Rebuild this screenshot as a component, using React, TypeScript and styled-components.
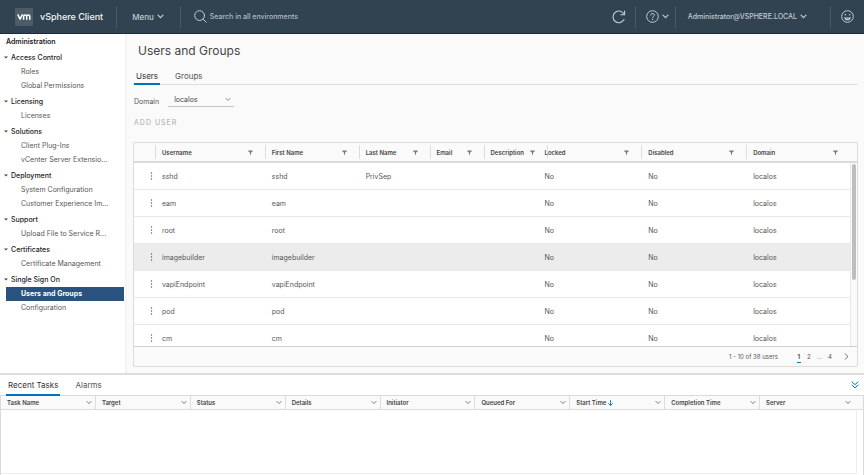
import React from "react";
import styled, { createGlobalStyle } from "styled-components";

const GlobalStyle = createGlobalStyle`
  *, *::before, *::after { box-sizing: border-box; }
  body { margin: 0; background: #fafafa; }
  body, button, input, select, table {
    font-family: Inter, "Liberation Sans", sans-serif;
    font-size: 7px;
    color: #565656;
  }
  button { padding: 0; border: 0; background: none; cursor: pointer; }
  a { color: inherit; text-decoration: none; }
`;

const Page = styled.div`
  height: 100vh;
  display: flex;
  flex-direction: column;
  overflow: hidden;
`;

/* ---------- header ---------- */

const Header = styled.header`
  flex: none;
  height: 34px;
  display: flex;
  align-items: center;
  background: #314351;
  border-bottom: 1px solid #1a2a3a;
  color: #c3cbd1;
`;

const Brand = styled.a`
  display: flex;
  align-items: center;
  gap: 7px;
  padding: 0 13px 0 15px;
  color: #f2f5f7;
  font-size: 9px;
  font-weight: 500;
  white-space: nowrap;
`;

const LogoTile = styled.span`
  width: 18px;
  height: 18px;
  display: grid;
  place-items: center;
  border-radius: 1px;
  background: #4c5c69;
`;

const Divider = styled.span`
  width: 1px;
  height: 22px;
  background: #485966;
`;

const HeaderButton = styled.button<{ $pad: string; $small?: boolean }>`
  display: flex;
  align-items: center;
  gap: 3px;
  padding: ${(p) => p.$pad};
  color: #c3cbd1;
  font-size: ${(p) => (p.$small ? "7px" : "8px")};
  font-weight: 500;
  white-space: nowrap;
`;

const SearchBox = styled.label`
  flex: 1;
  display: flex;
  align-items: center;
  gap: 3px;
  padding-left: 13px;
`;

const SearchInput = styled.input`
  flex: 1;
  min-width: 0;
  padding: 0;
  border: 0;
  outline: 0;
  background: transparent;
  color: #fff;
  font-size: 7px;
  font-weight: 500;
  &::placeholder { color: #b1bac1; opacity: 1; }
`;

/* ---------- navigation ---------- */

const Main = styled.div`
  flex: 1;
  min-height: 0;
  display: flex;
`;

const Sidebar = styled.nav`
  flex: none;
  width: 127px;
  background: #fff;
  border-right: 2px solid #f3f3f3;
  overflow: hidden;
`;

const NavTitle = styled.h2`
  margin: 0;
  padding-left: 6px;
  font-size: 7px;
  font-weight: 600;
  line-height: 15px;
  color: #222;
`;

const GroupButton = styled.button`
  display: flex;
  align-items: center;
  gap: 3px;
  height: 16px;
  padding-left: 4px;
  color: #222;
  font-weight: 500;
`;

const NavList = styled.ul`
  margin: 0;
  padding: 0 1px 0 6px;
  list-style: none;
`;

const NavLink = styled.a<{ $active?: boolean }>`
  display: block;
  padding: 0 14px 0 15px;
  line-height: 14px;
  white-space: nowrap;
  color: ${(p) => (p.$active ? "#fff" : "#565656")};
  font-weight: ${(p) => (p.$active ? 700 : 400)};
  background: ${(p) => (p.$active ? "#29527e" : "transparent")};
`;

/* ---------- content ---------- */

const Content = styled.main`
  flex: 1;
  min-width: 0;
  display: flex;
  flex-direction: column;
  align-items: stretch;
  padding: 8px 6px 6px;
  background: #fafafa;
`;

const Title = styled.h1`
  margin: 0 0 7px 5px;
  font-size: 12px;
  font-weight: 400;
  line-height: 18px;
  color: #454545;
`;

const Tabs = styled.div<{ $inset?: boolean }>`
  display: flex;
  gap: 13px;
  height: ${(p) => (p.$inset ? "20px" : "18px")};
  padding: ${(p) => (p.$inset ? "0 6px" : "0 1px")};
  border-bottom: ${(p) => (p.$inset ? "0" : "1px solid #dedede")};
`;

const Tab = styled.button<{ $active?: boolean }>`
  margin-bottom: -1px;
  padding: 0 2px 1px;
  font-size: 8px;
  white-space: nowrap;
  color: ${(p) => (p.$active ? "#333" : "#565656")};
  box-shadow: ${(p) => (p.$active ? "inset 0 -2px 0 #0072b8" : "none")};
`;

const DomainRow = styled.div`
  display: flex;
  align-items: flex-end;
  gap: 9px;
  margin-top: 8px;
  padding-left: 1px;
`;

const DomainLabel = styled.label`
  line-height: 11px;
`;

const SelectWrap = styled.span`
  position: relative;
  width: 66px;
  height: 14px;
  svg { position: absolute; right: 3px; top: 4px; pointer-events: none; }
`;

const Select = styled.select`
  display: block;
  width: 100%;
  height: 100%;
  padding: 0 6px;
  appearance: none;
  border: 0;
  border-bottom: 1px solid #c4c4c4;
  border-radius: 0;
  background: transparent;
  color: #454545;
`;

const AddButton = styled.button`
  align-self: flex-start;
  margin: 11px 0 14px 1px;
  height: 10px;
  line-height: 10px;
  letter-spacing: 1px;
  color: #a9a9a9;
`;

const Grid = styled.section`
  flex: 1;
  min-height: 0;
  display: flex;
  flex-direction: column;
  border: 1px solid #dcdcdc;
  border-radius: 2px;
`;

const GridBody = styled.div`
  flex: 1;
  min-height: 0;
  display: flex;
  overflow: hidden;
`;

const UserTable = styled.table`
  flex: 1;
  min-width: 0;
  align-self: flex-start;
  table-layout: fixed;
  border-collapse: separate;
  border-spacing: 0;
`;

const HeadCell = styled.th<{ $rule: number }>`
  position: relative;
  height: 20px;
  padding: 0 0 0 7px;
  border-bottom: 2px solid #dadada;
  font-size: 6px;
  font-weight: 600;
  text-align: left;
  white-space: nowrap;
  color: #454545;
  &::before {
    content: "";
    display: ${(p) => (p.$rule < 0 ? "none" : "block")};
    position: absolute;
    left: ${(p) => p.$rule}px;
    top: 2px;
    bottom: 2px;
    width: 1px;
    background: #dedede;
  }
`;

const HeadInner = styled.span<{ $end: number }>`
  position: relative;
  display: flex;
  align-items: center;
  justify-content: space-between;
  padding-right: ${(p) => p.$end}px;
`;

const FilterButton = styled.button`
  display: flex;
  flex: none;
`;

const Row = styled.tr<{ $hover?: boolean }>`
  background: ${(p) => (p.$hover ? "#ececec" : "#fff")};
`;

const Cell = styled.td`
  height: 27px;
  padding: 0 0 0 7px;
  border-bottom: 1px solid #e8e8e8;
  white-space: nowrap;
`;

const MenuCell = styled(Cell)`
  padding: 0 2px 0 0;
  button { display: flex; margin-left: auto; }
`;

const Gutter = styled.div`
  flex: none;
  width: 7px;
  display: flex;
  flex-direction: column;
`;

const GutterHead = styled.div`
  height: 20px;
  border-bottom: 2px solid #dadada;
`;

const Track = styled.div`
  flex: 1;
  padding: 1px 1px 0;
  border-left: 1px solid #e8e8e8;
`;

const Thumb = styled.div`
  width: 4px;
  height: 64%;
  border-radius: 2px;
  background: #bdbdbd;
`;

const Footer = styled.footer`
  flex: none;
  height: 20px;
  display: flex;
  align-items: center;
  justify-content: flex-end;
  padding-right: 8px;
  border-top: 1px solid #cfcfcf;
  font-size: 6px;
`;

const Pager = styled.nav`
  display: flex;
  align-items: center;
  gap: 6px;
  margin-left: 19px;
`;

const PageButton = styled.button<{ $active?: boolean }>`
  min-width: 4px;
  height: 13px;
  padding: 0;
  font-size: 6px;
  font-weight: ${(p) => (p.$active ? 700 : 400)};
  box-shadow: ${(p) => (p.$active ? "inset 0 -1px 0 #0072b8" : "none")};
`;

const NextButton = styled.button`
  display: flex;
  margin-left: 6px;
`;

/* ---------- recent tasks ---------- */

const TasksPanel = styled.section`
  flex: none;
  display: flex;
  flex-direction: column;
  border-top: 2px solid #dedede;
  background: #fff;
`;

const TasksTop = styled.div`
  position: relative;
  display: flex;
  align-items: center;
  justify-content: space-between;
  padding-right: 5px;
`;

const CollapseButton = styled.button`
  display: flex;
  color: #0079b8;
`;

const TasksFrame = styled.div`
  display: flex;
  flex-direction: column;
  height: 80px;
  border: 1px solid #dadada;
  border-bottom: 0;
`;

const TasksHead = styled.div`
  padding-right: 8px;
  background: #fafafa;
  border-bottom: 1px solid #dcdcdc;
`;

const TasksTable = styled.table`
  width: 100%;
  table-layout: fixed;
  border-collapse: separate;
  border-spacing: 0;
`;

const TaskHeadCell = styled.th`
  height: 13px;
  padding: 0 3px 0 6px;
  border-right: 1px solid #dedede;
  font-size: 6px;
  font-weight: 600;
  text-align: left;
  white-space: nowrap;
  color: #454545;
  &:last-child { border-right-color: transparent; }
`;

const TaskHeadInner = styled.span`
  display: flex;
  align-items: center;
  justify-content: space-between;
`;

const TaskLabel = styled.span`
  display: flex;
  align-items: center;
  gap: 2px;
`;

const TasksEmpty = styled.div`
  flex: 1;
  margin: 0 6px 1px 0;
  border-right: 1px solid #eeeeee;
  border-bottom: 1px solid #eeeeee;
`;

/* ---------- icons ---------- */

const Chevron = ({ w = 7 }: { w?: number }) => (
  <svg width={w} height="5" viewBox="0 0 7 5" fill="none" stroke="currentColor" strokeWidth={w > 6 ? 1.2 : 0.8} strokeLinecap="round" aria-hidden="true">
    <path d="M1 1.2 3.5 3.7 6 1.2" />
  </svg>
);

const SearchIcon = () => (
  <svg width="13" height="13" viewBox="0 0 13 13" fill="none" stroke="#c3cbd1" strokeLinecap="round" aria-hidden="true">
    <circle cx="5.6" cy="5.6" r="4.9" />
    <path d="m9.2 9.3 3 3" />
  </svg>
);

const RefreshIcon = () => (
  <svg width="14" height="14" viewBox="0 0 14 14" fill="none" stroke="currentColor" strokeWidth="1.1" strokeLinecap="round" aria-hidden="true">
    <path d="M12 9.6A5.8 5.8 0 1 1 12.2 4.6" />
    <path d="M12.6 1v3.8H8.8" />
  </svg>
);

const HelpIcon = () => (
  <svg width="13" height="13" viewBox="0 0 13 13" fill="none" stroke="currentColor" aria-hidden="true">
    <circle cx="6.5" cy="6.5" r="5.8" />
    <path d="M4.7 5.1c0-2.2 3.7-2.2 3.7 0 0 1.3-1.8 1.3-1.8 2.8" strokeLinecap="round" />
    <circle cx="6.6" cy="9.6" r=".7" fill="currentColor" stroke="none" />
  </svg>
);

const SmileIcon = () => (
  <svg width="13" height="13" viewBox="0 0 13 13" fill="none" stroke="currentColor" aria-hidden="true">
    <circle cx="6.5" cy="6.5" r="5.8" />
    <circle cx="4.4" cy="4.8" r=".8" fill="currentColor" stroke="none" />
    <circle cx="8.6" cy="4.8" r=".8" fill="currentColor" stroke="none" />
    <path d="M3.2 7.2h6.6a3.3 3.1 0 0 1-6.6 0z" fill="currentColor" stroke="none" />
    <path d="M4.6 8h3.8" stroke="#314351" strokeWidth=".6" />
  </svg>
);

const LogoIcon = () => (
  <svg width="14" height="8" viewBox="0 0 14 8" fill="none" stroke="#fff" strokeWidth="1.5" strokeLinecap="round" strokeLinejoin="round" aria-hidden="true">
    <path d="M1 1.9 3.1 6.2 5.2 1.9" />
    <path d="M6.6 6.2V3.5a1.5 1.5 0 0 1 3.1 0v2.7M9.7 3.5a1.5 1.5 0 0 1 3.1 0v2.7" />
  </svg>
);

const CaretIcon = () => (
  <svg width="4" height="3" viewBox="0 0 4 3" aria-hidden="true">
    <path d="M0 .4h4L2 2.6z" fill="#454545" />
  </svg>
);

const FilterIcon = () => (
  <svg width="5" height="5" viewBox="0 0 5 5" aria-hidden="true">
    <path d="M.2.6h4.6v.6L3 2.7v2H2v-2L.2 1.2z" fill="#7a7a7a" />
  </svg>
);

const DotsIcon = () => (
  <svg width="3" height="8" viewBox="0 0 3 8" fill="#565656" aria-hidden="true">
    <circle cx="1.5" cy="1" r=".7" />
    <circle cx="1.5" cy="4" r=".7" />
    <circle cx="1.5" cy="7" r=".7" />
  </svg>
);

const NextIcon = () => (
  <svg width="5" height="7" viewBox="0 0 5 7" fill="none" stroke="#565656" strokeWidth=".8" strokeLinecap="round" aria-hidden="true">
    <path d="M1 .6 4 3.5 1 6.4" />
  </svg>
);

const CollapseIcon = () => (
  <svg width="8" height="8" viewBox="0 0 8 8" fill="none" stroke="currentColor" strokeLinecap="round" aria-hidden="true">
    <path d="M1 1 4 3.6 7 1M1 4.2 4 6.8 7 4.2" />
  </svg>
);

const SortIcon = () => (
  <svg width="5" height="6" viewBox="0 0 5 6" fill="none" stroke="#0079b8" strokeWidth=".9" strokeLinecap="round" aria-hidden="true">
    <path d="M2.5.5v5M.6 3.6l1.9 1.9 1.9-1.9" />
  </svg>
);

/* ---------- data ---------- */

const navigation = [
  { name: "Access Control", items: ["Roles", "Global Permissions"] },
  { name: "Licensing", items: ["Licenses"] },
  { name: "Solutions", items: ["Client Plug-Ins", "vCenter Server Extensio..."] },
  { name: "Deployment", items: ["System Configuration", "Customer Experience Im..."] },
  { name: "Support", items: ["Upload File to Service R..."] },
  { name: "Certificates", items: ["Certificate Management"] },
  { name: "Single Sign On", items: ["Users and Groups", "Configuration"] },
];

const columns = [
  { name: "Username", width: 110, rule: 0, end: 12 },
  { name: "First Name", width: 94, rule: 0, end: 12 },
  { name: "Last Name", width: 71, rule: 0, end: 12 },
  { name: "Email", width: 54, rule: 0, end: 12 },
  { name: "Description", width: 54, rule: 0, end: 3 },
  { name: "Locked", width: 104, rule: 9, end: 12 },
  { name: "Disabled", width: 105, rule: 0, end: 12 },
  { name: "Domain", width: 104, rule: 0, end: 12 },
];

const users = [
  { name: "sshd", last: "PrivSep" },
  { name: "eam", last: "" },
  { name: "root", last: "" },
  { name: "imagebuilder", last: "" },
  { name: "vapiEndpoint", last: "" },
  { name: "pod", last: "" },
  { name: "cm", last: "" },
];

const taskColumns = [
  "Task Name", "Target", "Status", "Details", "Initiator",
  "Queued For", "Start Time", "Completion Time", "Server",
];

/* ---------- page ---------- */

export default function App() {
  return (
    <Page>
      <GlobalStyle />
      <Header>
        <Brand href="#home">
          <LogoTile><LogoIcon /></LogoTile>
          vSphere Client
        </Brand>
        <Divider />
        <HeaderButton $pad="0 16px 0 15px">Menu <Chevron /></HeaderButton>
        <Divider />
        <SearchBox>
          <SearchIcon />
          <SearchInput aria-label="Search" placeholder="Search in all environments" />
        </SearchBox>
        <HeaderButton $pad="0 9px" aria-label="Refresh"><RefreshIcon /></HeaderButton>
        <Divider />
        <HeaderButton $pad="0 6px 0 10px" aria-label="Help"><HelpIcon /><Chevron /></HeaderButton>
        <Divider />
        <HeaderButton $pad="0 23px 0 12px" $small>Administrator@VSPHERE.LOCAL <Chevron /></HeaderButton>
        <Divider />
        <HeaderButton $pad="0 10px" aria-label="Feedback"><SmileIcon /></HeaderButton>
      </Header>

      <Main>
        <Sidebar aria-label="Administration">
          <NavTitle>Administration</NavTitle>
          {navigation.map((group) => (
            <div key={group.name}>
              <GroupButton aria-expanded="true"><CaretIcon />{group.name}</GroupButton>
              <NavList>
                {group.items.map((item) => (
                  <li key={item}>
                    <NavLink href="#nav" $active={item === "Users and Groups"}>{item}</NavLink>
                  </li>
                ))}
              </NavList>
            </div>
          ))}
        </Sidebar>

        <Content>
          <Title>Users and Groups</Title>
          <Tabs role="tablist">
            <Tab role="tab" aria-selected="true" $active>Users</Tab>
            <Tab role="tab" aria-selected="false">Groups</Tab>
          </Tabs>
          <DomainRow>
            <DomainLabel htmlFor="domain">Domain</DomainLabel>
            <SelectWrap>
              <Select id="domain" defaultValue="localos"><option>localos</option></Select>
              <Chevron w={6} />
            </SelectWrap>
          </DomainRow>
          <AddButton disabled>ADD USER</AddButton>

          <Grid>
            <GridBody>
              <UserTable>
                <colgroup>
                  <col width={21} />
                  {columns.map((c) => <col key={c.name} width={c.width} />)}
                </colgroup>
                <thead>
                  <tr>
                    <HeadCell $rule={-1} aria-label="Actions" />
                    {columns.map((c) => (
                      <HeadCell key={c.name} $rule={c.rule}>
                        <HeadInner $end={c.end}>
                          {c.name}
                          <FilterButton aria-label={`Filter ${c.name}`}><FilterIcon /></FilterButton>
                        </HeadInner>
                      </HeadCell>
                    ))}
                  </tr>
                </thead>
                <tbody>
                  {users.map((u) => (
                    <Row key={u.name} $hover={u.name === "imagebuilder"}>
                      <MenuCell><button aria-label={`Actions for ${u.name}`}><DotsIcon /></button></MenuCell>
                      <Cell>{u.name}</Cell>
                      <Cell>{u.name}</Cell>
                      <Cell>{u.last}</Cell>
                      <Cell />
                      <Cell />
                      <Cell>No</Cell>
                      <Cell>No</Cell>
                      <Cell>localos</Cell>
                    </Row>
                  ))}
                </tbody>
              </UserTable>
              <Gutter>
                <GutterHead />
                <Track><Thumb /></Track>
              </Gutter>
            </GridBody>
            <Footer>
              <span>1 - 10 of 38 users</span>
              <Pager aria-label="Pages">
                <PageButton $active>1</PageButton>
                <PageButton>2</PageButton>
                <span>...</span>
                <PageButton>4</PageButton>
                <NextButton aria-label="Next page"><NextIcon /></NextButton>
              </Pager>
            </Footer>
          </Grid>
        </Content>
      </Main>

      <TasksPanel>
        <TasksTop>
          <Tabs role="tablist" $inset>
            <Tab role="tab" aria-selected="true" $active>Recent Tasks</Tab>
            <Tab role="tab" aria-selected="false">Alarms</Tab>
          </Tabs>
          <CollapseButton aria-label="Collapse"><CollapseIcon /></CollapseButton>
        </TasksTop>
        <TasksFrame>
          <TasksHead>
            <TasksTable>
              <thead>
                <tr>
                  {taskColumns.map((name) => (
                    <TaskHeadCell key={name}>
                      <TaskHeadInner>
                        <TaskLabel>{name}{name === "Start Time" && <SortIcon />}</TaskLabel>
                        <Chevron w={6} />
                      </TaskHeadInner>
                    </TaskHeadCell>
                  ))}
                </tr>
              </thead>
            </TasksTable>
          </TasksHead>
          <TasksEmpty />
        </TasksFrame>
      </TasksPanel>
    </Page>
  );
}
